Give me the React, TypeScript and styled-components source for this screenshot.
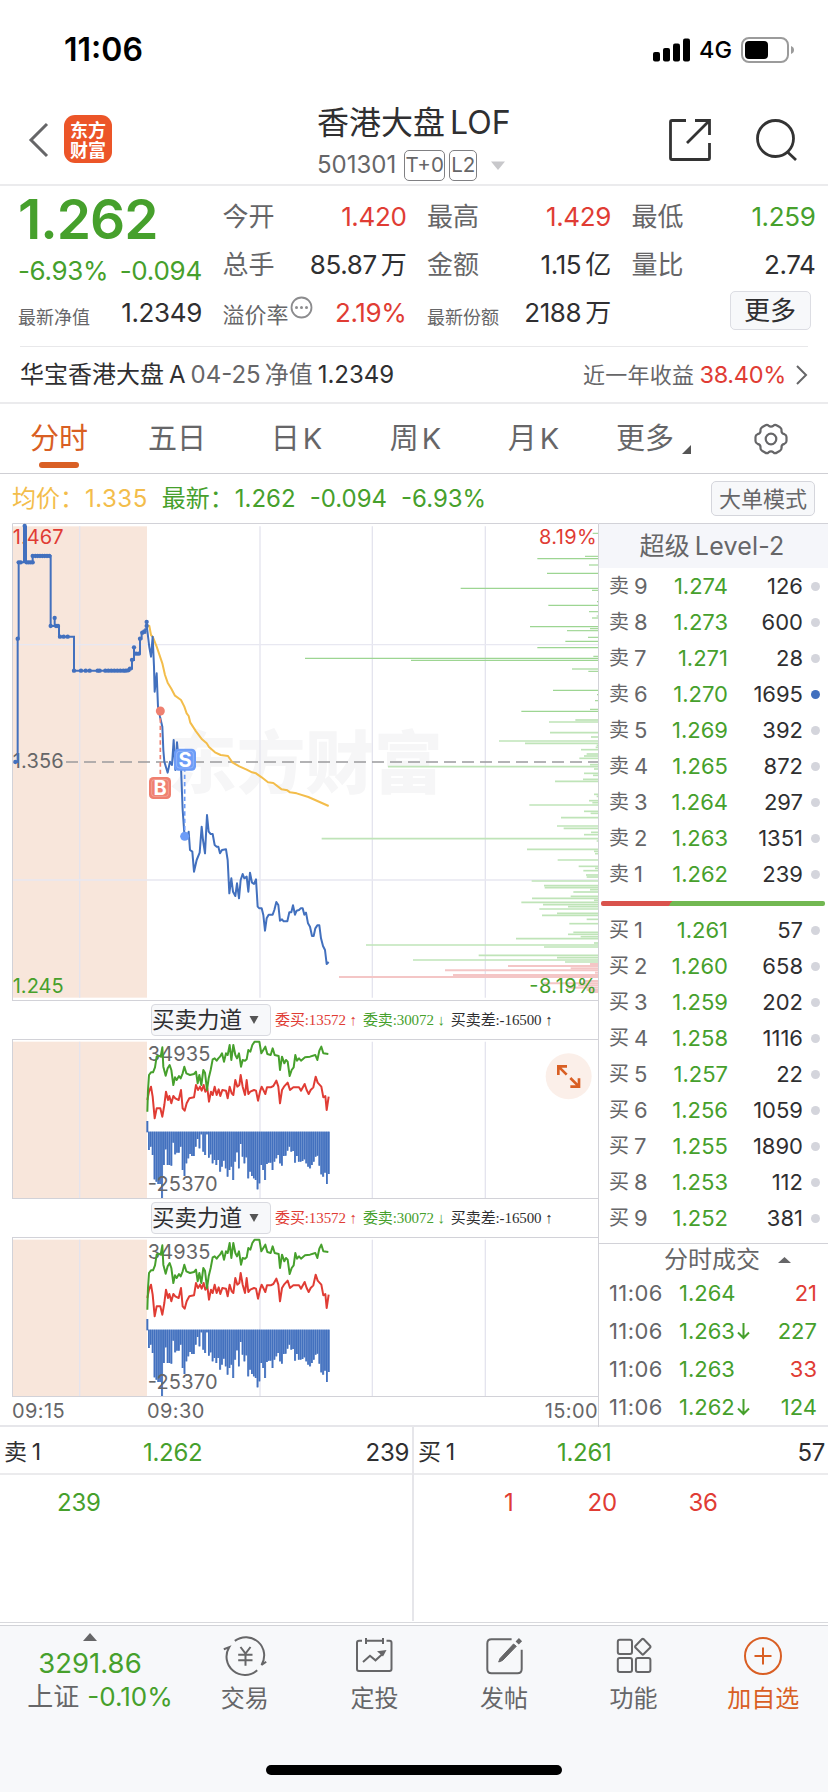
import React from "react";
import styled, { createGlobalStyle } from "styled-components";

const C = {
  green: "#46a02c",
  red: "#e03c34",
  ink: "#2f2f31",
  gray: "#666668",
  orange: "#d95f24",
  blue: "#4270be",
  yellow: "#f3bd4b",
  line: "#d2d2d8",
  soft: "#ebebed",
  panel: "#f7f8fa",
};

const FONT = `Inter, "Noto Sans CJK SC", sans-serif`;

const GlobalStyle = createGlobalStyle`
  * { box-sizing: border-box; }
  body { margin: 0; background: #fff; font-family: ${FONT}; color: ${C.ink}; }
`;

const Screen = styled.div`
  width: 828px;
  height: 1792px;
  display: flex;
  flex-direction: column;
  background: #fff;
  overflow: hidden;
  line-height: 1;
  white-space: nowrap;
`;

const Text = styled.span<{ $size?: number; $color?: string; $weight?: number; $track?: number; $ml?: number }>`
  font-size: ${(p) => p.$size ?? 24}px;
  color: ${(p) => p.$color ?? C.ink};
  font-weight: ${(p) => p.$weight ?? 400};
  letter-spacing: ${(p) => p.$track ?? 0}px;
  margin-left: ${(p) => p.$ml ?? 0}px;
`;

/* ---------- status bar ---------- */
const StatusBar = styled.div`
  height: 98px;
  padding: 2px 33px 0 64px;
  display: flex;
  align-items: center;
  justify-content: space-between;
`;
const StatusIcons = styled.div`
  display: flex;
  align-items: center;
`;

/* ---------- navigation ---------- */
const NavBar = styled.header`
  height: 88px;
  display: flex;
  align-items: center;
  justify-content: space-between;
  padding: 0 30px 2px 28px;
  border-bottom: 2px solid ${C.soft};
`;
const NavSide = styled.div`
  display: flex;
  align-items: center;
  width: 280px;
`;
const Logo = styled.div`
  width: 48px;
  height: 48px;
  margin: 0 0 2px 15px;
  border-radius: 11px;
  background: #ec5528;
  color: #fff;
  display: flex;
  flex-direction: column;
  align-items: center;
  padding-top: 4px;
  font: 700 18px/20px "Noto Sans CJK SC", sans-serif;
`;
const TitleBlock = styled.div`
  width: 200px;
  display: flex;
  flex-direction: column;
  gap: 11px;
  padding: 7px 0 0 4px;
`;
const TitleLine = styled.div`
  display: flex;
  align-items: center;
`;
const CodeLine = styled.div`
  display: flex;
  align-items: center;
  height: 31px;
`;
const Badge = styled.span<{ $w: number; $ml: number }>`
  width: ${(p) => p.$w}px;
  height: 31px;
  margin-left: ${(p) => p.$ml}px;
  border: 1.5px solid #808083;
  border-radius: 5px;
  color: ${C.gray};
  font-size: 20.5px;
  line-height: 28px;
  text-align: center;
`;
const NavActions = styled(NavSide)`
  justify-content: flex-end;
  gap: 43px;
`;

/* ---------- quote ---------- */
const Quote = styled.section`
  height: 160px;
  display: grid;
  grid-template-columns: 184px 184px 184px 184px;
  column-gap: 20.5px;
  padding: 7px 0 0 18px;
`;
const QuoteCol = styled.div`
  display: flex;
  flex-direction: column;
`;
const BigPrice = styled.div`
  height: 54px;
  line-height: 52px;
  color: ${C.green};
  font-size: 55px;
  font-weight: 600;
  letter-spacing: -1px;
`;
const ChangeRow = styled.div`
  height: 42px;
  padding-top: 6px;
  display: flex;
  align-items: center;
  justify-content: space-between;
`;
const QuoteRow = styled.div`
  height: 48px;
  display: flex;
  align-items: center;
  justify-content: space-between;
`;
const QuoteLabel = styled.span<{ $size: number }>`
  display: flex;
  align-items: center;
  color: ${C.gray};
  font-size: ${(p) => p.$size}px;
  padding-top: ${(p) => (p.$size === 18 ? 10 : p.$size === 22 ? 4 : 0)}px;
`;
const Unit = styled.span`
  margin-left: 4px;
`;
const MoreButton = styled.button`
  width: 81px;
  height: 39px;
  margin: 0 5px 5px auto;
  padding: 0;
  border: 1.5px solid #dcdde3;
  border-radius: 5px;
  background: ${C.panel};
  color: ${C.ink};
  font: 400 26px/34px ${FONT};
`;
const FundRow = styled.div`
  height: 56px;
  margin: 0 20px;
  border-top: 1px solid #e8e8ea;
  display: flex;
  align-items: center;
`;
const Spacer = styled.div`
  flex: 1;
`;

/* ---------- tabs ---------- */
const Tabs = styled.nav`
  height: 72px;
  border-top: 2px solid ${C.soft};
  border-bottom: 1px solid #cfcfd4;
  display: grid;
  grid-template-columns: 118px 118px 121px 117px 119px 121px 113px;
`;
const Tab = styled.div<{ $active?: boolean }>`
  display: flex;
  flex-direction: column;
  align-items: center;
  padding-top: 19px;
  font-size: 29px;
  line-height: 32px;
  color: ${(p) => (p.$active ? C.orange : C.gray)};
  &::after {
    content: "";
    display: ${(p) => (p.$active ? "block" : "none")};
    width: 40px;
    height: 6px;
    margin-top: 7px;
    border-radius: 3px;
    background: ${C.orange};
  }
`;
const TabLabel = styled.span`
  display: flex;
  gap: 3px;
`;

/* ---------- legend ---------- */
const Legend = styled.div`
  height: 49px;
  display: flex;
  align-items: center;
  padding: 0 13px 0 12px;
`;
const ModeButton = styled.button`
  width: 104px;
  height: 35px;
  padding: 0;
  border: 1.5px solid #d5d6dc;
  border-radius: 5px;
  background: ${C.panel};
  color: ${C.gray};
  font: 400 22px/30px ${FONT};
`;

/* ---------- market body ---------- */
const Market = styled.section`
  height: 904px;
  display: grid;
  grid-template-columns: 587px 229px;
  padding-left: 12px;
  border-bottom: 2px solid #e6e6ea;
`;
const Charts = styled.div`
  display: flex;
  flex-direction: column;
`;
const ChartSvg = styled.svg`
  display: block;
  flex: none;
`;
const IndicatorBar = styled.div`
  height: 38px;
  padding-left: 139px;
  display: flex;
  align-items: center;
  border-right: 1px solid ${C.line};
  font-family: "Liberation Serif", "Noto Sans CJK SC", serif;
  font-size: 15px;
`;
const IndicatorSelect = styled.div`
  width: 120px;
  height: 32px;
  padding-right: 11px;
  margin-right: 4px;
  display: flex;
  align-items: center;
  justify-content: space-between;
  border: 1.5px solid #d9dae0;
  border-radius: 4px;
  background: ${C.panel};
  font: 400 22.5px/28px ${FONT};
  color: ${C.ink};
`;
const Stat = styled.span<{ $color: string }>`
  color: ${(p) => p.$color};
  margin-right: 6px;
  letter-spacing: -0.1px;
`;
const TimeAxis = styled.div`
  flex: 1;
  display: flex;
  align-items: center;
  padding-bottom: 2px;
  border-right: 1px solid ${C.line};
  font-size: 20px;
  color: ${C.gray};
  letter-spacing: 0.4px;
`;

/* ---------- order book ---------- */
const Book = styled.aside`
  display: flex;
  flex-direction: column;
`;
const BookTitle = styled.div`
  height: 45px;
  border-top: 1px solid ${C.line};
  background: #f5f6fa;
  display: flex;
  align-items: center;
  justify-content: center;
  padding-right: 3px;
  gap: 5px;
  color: ${C.gray};
  font-size: 25px;
  letter-spacing: 0.2px;
`;
const BookRow = styled.div`
  height: 36px;
  display: grid;
  grid-template-columns: 25px 26px 68px 75px 17px;
  padding-left: 10px;
  align-items: center;
  font-size: 22px;
`;
const Side = styled.span`
  color: ${C.gray};
  font-size: 20px;
`;
const Level = styled.span`
  color: ${C.gray};
`;
const Price = styled.span`
  color: ${C.green};
  text-align: right;
`;
const Qty = styled.span<{ $color?: string }>`
  color: ${(p) => p.$color ?? C.ink};
  text-align: right;
`;
const Dot = styled.i<{ $on: boolean }>`
  width: 9px;
  height: 9px;
  border-radius: 50%;
  justify-self: end;
  background: ${(p) => (p.$on ? C.blue : "#d4d5dc")};
`;
const Ratio = styled.div`
  height: 5px;
  margin: 9px 3px 6px 2px;
  border-radius: 2px;
  background: linear-gradient(125deg, #d9534c 31.2%, #72b852 31.2%);
`;
const TradesTitle = styled.div`
  height: 32px;
  margin-top: 7px;
  border-top: 1px solid ${C.line};
  display: flex;
  align-items: center;
  padding-left: 65px;
  gap: 18px;
  font-size: 24px;
  color: ${C.gray};
`;
const TradeRow = styled.div`
  height: 38px;
  display: grid;
  grid-template-columns: 70px 58px 16px 64px;
  padding: 0 0 2px 10px;
  align-items: center;
  font-size: 22px;
  color: ${C.green};
`;
const TradeTime = styled(Level)`
  letter-spacing: 0.4px;
`;

/* ---------- queues ---------- */
const Queues = styled.section`
  height: 196px;
  display: grid;
  grid-template-columns: 414px 414px;
  border-bottom: 1.5px solid #d8d9dd;
`;
const Queue = styled.div<{ $divided?: boolean }>`
  height: 194px;
  border-right: ${(p) => (p.$divided ? "2px solid #e6e6ea" : "none")};
`;
const QueueHead = styled.div`
  height: 48px;
  display: grid;
  grid-template-columns: 139px 1fr 1fr;
  align-items: center;
  padding: 5px 3px 0 4px;
  border-bottom: 2px solid ${C.soft};
  font-size: 24px;
  letter-spacing: -0.3px;
`;
const HeadLabel = styled.span`
  display: flex;
  align-items: center;
  gap: 5px;
  font-size: 23px;
`;
const QueuePrice = styled.span`
  color: ${C.green};
`;
const QueueCells = styled.div<{ $color: string; $pad: number }>`
  height: 56px;
  display: flex;
  align-items: center;
  padding-left: ${(p) => p.$pad}px;
  color: ${(p) => p.$color};
  font-size: 24px;
  letter-spacing: -0.2px;
`;
const Cell = styled.span<{ $w: number }>`
  width: ${(p) => p.$w}px;
`;

/* ---------- bottom bar ---------- */
const BottomBar = styled.footer`
  margin-top: 2px;
  flex: 1;
  border-top: 1.5px solid #d2d3d8;
  background: ${C.panel};
  display: flex;
  flex-direction: column;
`;
const Actions = styled.div`
  height: 139px;
  display: grid;
  grid-template-columns: 180px repeat(5, 129.6px);
`;
const IndexBlock = styled.div`
  display: flex;
  flex-direction: column;
  align-items: center;
  padding-top: 7px;
`;
const IndexValue = styled.div`
  height: 34px;
  margin-top: 5px;
  line-height: 34px;
  font-size: 27.5px;
  color: ${C.green};
`;
const IndexLine = styled.div`
  display: flex;
  align-items: center;
  gap: 8px;
  height: 34px;
  margin-left: 20px;
  letter-spacing: 0.1px;
`;
const Action = styled.div<{ $accent?: boolean }>`
  display: flex;
  flex-direction: column;
  align-items: center;
  padding-top: 10px;
  gap: 7px;
  font-size: 24px;
  line-height: 28px;
  color: ${(p) => (p.$accent ? C.orange : C.gray)};
`;
const HomeIndicator = styled.div`
  width: 296px;
  height: 10px;
  border-radius: 5px;
  background: #000;
  align-self: center;
`;

/* ---------- data ---------- */
const sells = [
  [9, "1.274", 126], [8, "1.273", 600], [7, "1.271", 28], [6, "1.270", 1695], [5, "1.269", 392],
  [4, "1.265", 872], [3, "1.264", 297], [2, "1.263", 1351], [1, "1.262", 239],
] as const;
const buys = [
  [1, "1.261", 57], [2, "1.260", 658], [3, "1.259", 202], [4, "1.258", 1116], [5, "1.257", 22],
  [6, "1.256", 1059], [7, "1.255", 1890], [8, "1.253", 112], [9, "1.252", 381],
] as const;
const trades = [
  ["1.264", "", "21", C.red],
  ["1.263", "↓", "227", C.green],
  ["1.263", "", "33", C.red],
  ["1.262", "↓", "124", C.green],
];

const priceLine =
  "440,345 448,412 453,440 458,380 462,470 464,545 470,490 474,590 480,620 487,650 490,720 493,755 503,788 510,755 516,765 521,690 526,780 531,697 538,770 543,772 548,900 553,970 560,985 566,965 570,1020 577,1025 582,1085 590,1050 599,1028 605,950 609,990 615,1030 621,915 626,965 632,972 638,972 644,1005 650,1010 655,1010 660,1030 666,1020 678,1018 683,1050 688,1150 694,1105 699,1145 706,1158 711,1120 717,1165 722,1110 728,1092 733,1105 740,1100 745,1145 750,1088 756,1118 762,1122 768,1108 773,1190 778,1195 785,1195 790,1215 795,1262 800,1225 806,1214 818,1214 823,1200 829,1176 835,1185 840,1232 846,1228 851,1234 862,1234 868,1207 874,1207 879,1186 885,1214 890,1202 897,1200 902,1195 908,1195 913,1214 918,1208 924,1240 930,1250 936,1278 941,1278 946,1255 952,1246 958,1246 963,1285 969,1308 975,1320 980,1362 986,1356";
const averageLine =
  "440,345 448,348 453,375 459,382 470,410 487,460 495,495 503,518 514,536 525,557 543,570 553,590 560,610 566,618 571,638 588,664 606,688 620,700 627,711 645,727 662,735 684,738 697,757 718,769 740,779 756,787 768,790 785,802 804,817 820,819 845,838 862,841 870,847 890,850 925,861 986,888";
const auctionLine =
  "M46 756H53V386H56V157H98V138H152V348H164V324V348H177V380H222V482H388V476H396V450H402V412V431H420V386H425V368H436V358H440V336V350";
const auctionDots = [
  [46, 756], [53, 386], [56, 157], [62, 157], [74, 48], [80, 157], [86, 157], [92, 157], [98, 157], [98, 138], [106, 138], [113, 138],
  [120, 138], [127, 138], [134, 138], [141, 138], [148, 138], [152, 348], [164, 324], [168, 348], [174, 348], [180, 380], [191, 380],
  [203, 380], [222, 482], [243, 482], [257, 482], [269, 482], [293, 482], [299, 482], [316, 482], [325, 482], [334, 482], [343, 482],
  [352, 482], [361, 482], [370, 482], [377, 482], [384, 481], [390, 476], [396, 450], [402, 412], [408, 431], [416, 431], [420, 386],
  [427, 368], [433, 364], [440, 348], [440, 336],
];

/* price level volumes: [left edge, level] */
const sellVolumes = [
  [908, 70], [885, 139], [742, 146], [897, 165], [771, 190], [512, 235], [906, 241], [921, 275], [775, 286], [897, 305], [920, 318],
  [906, 324], [720, 350], [900, 356], [831, 362], [894, 382], [826, 394], [742, 413], [910, 439], [45, 445], [363, 451], [846, 477],
  [895, 484], [789, 541], [921, 554], [915, 572], [900, 598], [694, 604], [856, 630], [777, 636], [780, 668], [903, 681], [627, 693],
  [705, 700], [920, 706], [917, 712], [873, 719], [890, 732], [882, 738], [868, 745], [900, 764], [294, 770], [912, 777], [882, 790],
  [909, 796], [879, 808], [795, 814], [912, 853], [920, 859], [897, 872], [907, 878], [718, 885], [882, 904], [902, 910], [813, 923],
  [801, 948], [821, 955], [903, 967], [882, 974], [95, 986], [920, 993], [711, 1018], [912, 1024], [915, 1031], [803, 1050],
  [866, 1069], [915, 1075], [880, 1082], [888, 1095], [890, 1101], [725, 1113], [762, 1127], [764, 1133], [900, 1139], [850, 1146],
  [842, 1159], [726, 1165], [912, 1171], [694, 1177], [759, 1184], [834, 1190], [748, 1197], [801, 1210], [756, 1216], [890, 1228],
  [838, 1241], [850, 1267], [834, 1273], [872, 1280], [678, 1286], [912, 1299], [228, 1305], [762, 1311], [566, 1336], [801, 1343],
  [369, 1350], [825, 1356],
];
const buyVolumes = [
  [900, 1362], [654, 1368], [842, 1375], [465, 1381], [915, 1388], [489, 1395], [147, 1401], [880, 1413], [760, 1420], [865, 1426],
  [830, 1433], [890, 1440], [900, 1446],
];

const askPower =
  "442,365 444,300 447,255 453,247 459,247 465,232 470,200 476,197 482,200 487,172 490,230 497,257 503,235 509,225 514,240 520,285 525,262 530,270 537,258 542,265 548,250 553,230 559,250 570,255 582,252 588,245 593,280 598,255 604,285 610,240 615,248 621,300 626,265 632,240 638,208 644,205 650,212 655,205 660,200 666,190 672,215 678,190 683,195 689,165 694,210 700,165 706,195 711,205 717,190 723,230 728,210 735,212 740,208 745,180 751,185 757,165 764,155 778,155 784,190 790,180 796,170 802,192 812,195 818,175 824,195 836,198 840,240 846,200 853,220 858,210 863,215 869,258 875,240 881,232 886,195 891,212 897,205 903,212 915,202 930,200 946,195 952,210 958,182 964,170 970,190 985,192";
const bidPower =
  "442,330 447,305 453,290 458,320 464,385 470,355 481,355 487,380 493,345 498,305 504,330 508,318 514,340 520,318 526,325 536,330 543,300 548,355 554,362 560,340 568,325 582,322 588,285 594,300 600,290 605,302 611,285 616,305 622,295 627,335 633,305 638,315 644,290 650,315 656,298 661,318 667,300 678,302 683,325 689,290 695,310 700,315 706,270 712,290 718,285 722,255 728,290 735,315 740,270 745,312 751,305 762,300 768,302 774,332 780,305 785,290 796,312 801,292 812,292 820,288 829,272 835,290 840,340 846,300 852,290 863,278 870,300 880,292 897,292 903,302 914,282 920,300 926,312 932,300 940,292 947,260 953,278 964,290 970,322 976,318 980,360 986,320";
const powerGap = [
  480, 470, 495, 568, 575, 582, 582, 624, 525, 478, 525, 525, 527, 458, 493, 488, 488, 470, 540, 558, 520, 505, 492, 498, 498, 470,
  447, 475, 433, 485, 495, 433, 503, 493, 520, 510, 525, 510, 545, 530, 512, 535, 560, 540, 530, 570, 515, 487, 535, 462, 500, 520,
  502, 565, 545, 558, 565, 570, 598, 580, 525, 540, 570, 522, 518, 518, 540, 515, 505, 495, 520, 527, 498, 497, 482, 470, 485, 483,
  518, 498, 515, 515, 513, 508, 520, 530, 535, 525, 515, 500, 497, 527, 553, 560, 548, 582, 552,
];

const gridX = [239, 780, 1117, 1456];

function Tag({ x, y, label, color }: { x: number; y: number; label: string; color: string }) {
  return (
    <g>
      <rect x={x - 33} y={y - 33} width={66} height={66} rx={13} fill={color} />
      <rect x={x - 25} y={y - 25} width={50} height={50} rx={8} fill="none" stroke="#fff" strokeOpacity={0.25} strokeWidth={3} />
      <text x={x} y={y + 21} textAnchor="middle" fontSize={60} fontWeight={700} fill="#fff">{label}</text>
    </g>
  );
}

function PriceChart() {
  return (
    <ChartSvg width={587} height={478} viewBox="36 39 1761 1434" fontFamily={FONT}>
      <rect x={38} y={49} width={403} height={1414} fill="#f8e6db" />
      <text x={504} y={834} fontSize={206} fontWeight={900} fill="#f6f6f7" textLength={824}>东方财富</text>
      {gridX.map((x) => <path key={x} d={`M${x} 49V1463`} stroke="#e4e4ee" strokeWidth={4} />)}
      <path d="M38 404H1794M38 1110H1794" stroke="#e8e8f1" strokeWidth={4} />
      {sellVolumes.map(([x, y]) => (
        <path key={y} d={`M${x + 870} ${y}H1794`} stroke={y < 640 ? "#9dd592" : "#bfe4b8"} strokeWidth={y < 640 ? 3.4 : 5} />
      ))}
      {buyVolumes.map(([x, y]) => <path key={y} d={`M${x + 870} ${y}H1794`} stroke="#f4c6c6" strokeWidth={6} />)}
      <path d="M198 756H1794" stroke="#9b9b9d" strokeWidth={5} strokeDasharray="36 18" />
      <path d="M37.5 1473V40.5H1795.5V1473M36 1471.5H1797" fill="none" stroke={C.line} strokeWidth={3} />
      <g fontSize={60}>
        <text x={38} y={102} fill={C.red} textLength={153}>1.467</text>
        <text x={38} y={774} fill={C.gray} textLength={153}>1.356</text>
        <text x={38} y={1449} fill={C.green} textLength={153}>1.245</text>
        <text x={1617} y={102} fill={C.red} textLength={173}>8.19%</text>
        <text x={1588} y={1449} fill={C.green} textLength={202}>-8.19%</text>
      </g>
      <polyline points={averageLine} fill="none" stroke={C.yellow} strokeWidth={6} strokeLinejoin="round" />
      <path d={auctionLine} fill="none" stroke={C.blue} strokeWidth={6} />
      <path d="M75 48V157" stroke={C.blue} strokeWidth={12} />
      {auctionDots.map(([x, y], i) => <circle key={i} cx={x} cy={y} r={6.5} fill={C.blue} />)}
      <polyline points={priceLine} fill="none" stroke={C.blue} strokeWidth={6} strokeLinejoin="round" />
      <path d="M481 603V800" stroke="#ef8070" strokeWidth={5} strokeDasharray="13 9" />
      <path d="M554 750V978" stroke="#6c9cf7" strokeWidth={5} strokeDasharray="13 9" />
      <circle cx={481} cy={603} r={13.5} fill="#ef8070" />
      <circle cx={554} cy={979} r={13.5} fill="#6c9cf7" />
      <Tag x={480} y={834} label="B" color="#ef8070" />
      <Tag x={555} y={749} label="S" color="#6c9cf7" />
    </ChartSvg>
  );
}

function PowerChart({ expandable }: { expandable?: boolean }) {
  return (
    <ChartSvg width={587} height={160} viewBox="36 147 1761 480" fontFamily={FONT}>
      <rect x={38} y={155} width={403} height={470} fill="#f8e6db" />
      {gridX.map((x) => <path key={x} d={`M${x} 155V624`} stroke="#e4e4ee" strokeWidth={4} />)}
      <rect x={37.5} y={148.5} width={1758} height={477} fill="none" stroke={C.line} strokeWidth={3} />
      <path d="M442 393V427" stroke={C.blue} strokeWidth={6} />
      {powerGap.map((v, i) => {
        const x = 444.2 + i * 5.62;
        return (
          <g key={i}>
            <rect x={x} y={425} width={5.7} height={v - 425} fill="#6f93d0" />
            <rect x={x} y={425} width={4.2} height={v - 425} fill={C.blue} />
          </g>
        );
      })}
      <g fontSize={60} fill={C.gray}>
        <text x={443} y={214} textLength={188}>34935</text>
        <text x={443} y={604} textLength={210}>-25370</text>
      </g>
      <polyline points={bidPower} fill="none" stroke={C.red} strokeWidth={6} strokeLinejoin="round" />
      <polyline points={askPower} fill="none" stroke={C.green} strokeWidth={6} strokeLinejoin="round" />
      {expandable && (
        <g>
          <circle cx={1706} cy={259} r={69} fill="#fbefe9" />
          <path d="M1675 255V229H1701M1675 229L1700 254M1737 265V290H1711M1737 290L1711 264" fill="none" stroke={C.orange} strokeWidth={8} />
        </g>
      )}
    </ChartSvg>
  );
}

function Indicator() {
  return (
    <IndicatorBar>
      <IndicatorSelect>
        买卖力道
        <svg width="10" height="8" viewBox="0 0 10 8"><path d="M0.5 0H9.5L5 8Z" fill="#555" /></svg>
      </IndicatorSelect>
      <Stat $color={C.red}>委买:13572 ↑</Stat>
      <Stat $color={C.green}>委卖:30072 ↓</Stat>
      <Stat $color={C.ink}>买卖差:-16500 ↑</Stat>
    </IndicatorBar>
  );
}

function Row({ side, row }: { side: string; row: readonly [number, string, number] }) {
  return (
    <BookRow>
      <Side>{side}</Side>
      <Level>{row[0]}</Level>
      <Price>{row[1]}</Price>
      <Qty>{row[2]}</Qty>
      <Dot $on={row[2] === 1695} />
    </BookRow>
  );
}

function Metric({ label, size = 26, children, color }: { label: React.ReactNode; size?: number; children: React.ReactNode; color?: string }) {
  return (
    <QuoteRow>
      <QuoteLabel $size={size}>{label}</QuoteLabel>
      <Text $size={26} $color={color} $track={-0.35}>{children}</Text>
    </QuoteRow>
  );
}

const stroke = { fill: "none", stroke: "currentColor", strokeWidth: 2 } as const;

export default function App() {
  return (
    <Screen>
      <GlobalStyle />
      <StatusBar>
        <Text $size={32} $weight={600} $color="#000">11:06</Text>
        <StatusIcons>
          <svg width="38" height="24" viewBox="0 0 38 24">
            <rect x="0" y="14" width="7" height="9.5" rx="2" />
            <rect x="10" y="10" width="7" height="13.5" rx="2" />
            <rect x="20" y="5.5" width="7" height="18" rx="2" />
            <rect x="30" y="0.5" width="7" height="23" rx="2" />
          </svg>
          <Text $size={23.5} $weight={500} $color="#000" $ml={8}>4G</Text>
          <svg width="54" height="26" viewBox="0 0 54 26" style={{ marginLeft: 9 }}>
            <rect x="1" y="1" width="46" height="24" rx="7" fill="none" stroke="#9b9b9b" strokeWidth="2" />
            <rect x="4" y="4" width="23" height="18" rx="4" />
            <path d="M50 9c2 .8 3 2 3 4s-1 3.2-3 4z" fill="#9b9b9b" />
          </svg>
        </StatusIcons>
      </StatusBar>

      <NavBar>
        <NavSide>
          <svg width="21" height="36" viewBox="0 0 21 36"><path d="M19 2L3 18L19 34" fill="none" stroke={C.gray} strokeWidth="3" /></svg>
          <Logo><span>东方</span><span>财富</span></Logo>
        </NavSide>
        <TitleBlock>
          <TitleLine>
            <Text $size={32}>香港大盘</Text>
            <Text $size={32} $ml={5}>LOF</Text>
          </TitleLine>
          <CodeLine>
            <Text $size={24} $color={C.gray}>501301</Text>
            <Badge $w={41} $ml={8}>T+0</Badge>
            <Badge $w={28} $ml={4}>L2</Badge>
            <svg width="14" height="9" viewBox="0 0 14 9" style={{ marginLeft: 14 }}><path d="M0 0.5H14L7 9Z" fill="#c8c8cb" /></svg>
          </CodeLine>
        </TitleBlock>
        <NavActions>
          <svg width="44" height="44" viewBox="0 0 44 44" fill="none" stroke="#333" strokeWidth="2.8">
            <path d="M18 2.5H4Q2.500 2.5 2.5 4V40Q2.500 41.5 4 41.5H40Q41.5 41.5 41.5 40V25M27 2.5H41.5V17M41.5 2.5L19 25" />
          </svg>
          <svg width="43" height="43" viewBox="0 0 43 43" fill="none" stroke="#333" strokeWidth="2.8">
            <circle cx="20.5" cy="19.5" r="18" /><path d="M32.5 33L41 41" />
          </svg>
        </NavActions>
      </NavBar>

      <Quote>
        <QuoteCol>
          <BigPrice>1.262</BigPrice>
          <ChangeRow>
            <Text $size={26} $color={C.green} $track={-0.35}>-6.93%</Text>
            <Text $size={26} $color={C.green} $track={-0.25}>-0.094</Text>
          </ChangeRow>
          <Metric label="最新净值" size={18}>1.2349</Metric>
        </QuoteCol>
        <QuoteCol>
          <Metric label="今开" color={C.red}>1.420</Metric>
          <Metric label="总手">85.87<Unit>万</Unit></Metric>
          <Metric
            size={22}
            color={C.red}
            label={
              <>
                溢价率
                <svg width="23" height="23" viewBox="0 0 23 23" style={{ margin: "0 0 15px 1px" }}>
                  <circle cx="11.5" cy="11.5" r="10" fill="none" stroke="#8c8c8e" strokeWidth="1.8" />
                  <circle cx="6.5" cy="11.5" r="1.5" fill="#8c8c8e" /><circle cx="11.5" cy="11.5" r="1.5" fill="#8c8c8e" /><circle cx="16.5" cy="11.5" r="1.5" fill="#8c8c8e" />
                </svg>
              </>
            }
          >
            2.19%
          </Metric>
        </QuoteCol>
        <QuoteCol>
          <Metric label="最高" color={C.red}>1.429</Metric>
          <Metric label="金额">1.15<Unit>亿</Unit></Metric>
          <Metric label="最新份额" size={18}>2188<Unit>万</Unit></Metric>
        </QuoteCol>
        <QuoteCol>
          <Metric label="最低" color={C.green}>1.259</Metric>
          <Metric label="量比">2.74</Metric>
          <QuoteRow><MoreButton>更多</MoreButton></QuoteRow>
        </QuoteCol>
      </Quote>
      <FundRow>
        <Text>华宝香港大盘</Text>
        <Text $ml={5}>A</Text>
        <Text $ml={5} $color={C.gray}>04-25</Text>
        <Text $ml={4} $color={C.gray}>净值</Text>
        <Text $ml={5}>1.2349</Text>
        <Spacer />
        <Text $size={22} $color={C.gray} $track={0.3}>近一年收益</Text>
        <Text $ml={5} $size={23.5} $track={-0.3} $color={C.red}>38.40%</Text>
        <svg width="13" height="22" viewBox="0 0 13 22" style={{ marginLeft: 9 }}><path d="M2 2L11 11L2 20" fill="none" stroke={C.gray} strokeWidth="2" /></svg>
      </FundRow>

      <Tabs>
        <Tab $active>分时</Tab>
        <Tab>五日</Tab>
        <Tab><TabLabel>日<span>K</span></TabLabel></Tab>
        <Tab><TabLabel>周<span>K</span></TabLabel></Tab>
        <Tab><TabLabel>月<span>K</span></TabLabel></Tab>
        <Tab>
          <TabLabel>
            更多
            <svg width="9" height="9" viewBox="0 0 9 9" style={{ margin: "22px 0 0 5px" }}><path d="M9 0V9H0Z" fill="#555" /></svg>
          </TabLabel>
        </Tab>
        <Tab>
          <svg width="34" height="32" viewBox="0 0 34 32" fill="none" stroke={C.gray} strokeWidth="2.2" strokeLinejoin="round">
            <path d="M11 2.5Q13 1 14.5 2.6Q17 4.8 19.5 2.6Q21 1 23 2.5L26 4.3Q27.8 5.5 27.5 7.5Q27.2 10.5 30.5 11.2Q32.5 12 32.5 14V18Q32.5 20 30.5 20.8Q27.2 21.5 27.5 24.5Q27.8 26.5 26 27.7L23 29.5Q21 31 19.5 29.4Q17 27.2 14.5 29.4Q13 31 11 29.5L8 27.7Q6.2 26.5 6.5 24.5Q6.8 21.5 3.5 20.8Q1.5 20 1.5 18V14Q1.5 12 3.5 11.2Q6.8 10.5 6.5 7.5Q6.2 5.5 8 4.3Z" />
            <circle cx="17" cy="16" r="5.3" />
          </svg>
        </Tab>
      </Tabs>

      <Legend>
        <Text $color={C.yellow}>均价：</Text>
        <Text $color={C.yellow} $ml={1} $track={0.5}>1.335</Text>
        <Text $ml={14} $color={C.green}>最新：</Text>
        <Text $color={C.green} $ml={1}>1.262</Text>
        <Text $ml={14} $color={C.green}>-0.094</Text>
        <Text $ml={14} $color={C.green}>-6.93%</Text>
        <Spacer />
        <ModeButton>大单模式</ModeButton>
      </Legend>

      <Market>
        <Charts>
          <PriceChart />
          <Indicator />
          <PowerChart expandable />
          <Indicator />
          <PowerChart />
          <TimeAxis>
            <Cell $w={135}>09:15</Cell>
            <Cell $w={100}>09:30</Cell>
            <Spacer />
            <span>15:00</span>
          </TimeAxis>
        </Charts>
        <Book>
          <BookTitle><span>超级</span><span>Level-2</span></BookTitle>
          {sells.map((r) => <Row key={r[0]} side="卖" row={r} />)}
          <Ratio />
          {buys.map((r) => <Row key={r[0]} side="买" row={r} />)}
          <TradesTitle>
            分时成交
            <svg width="13" height="6" viewBox="0 0 13 6"><path d="M0 6H13L6.5 0Z" fill={C.gray} /></svg>
          </TradesTitle>
          {trades.map(([price, arrow, qty, color], i) => (
            <TradeRow key={i}>
              <TradeTime>11:06</TradeTime>
              <span>{price}</span>
              {arrow ? (
                <svg width="13" height="18" viewBox="0 0 13 18"><path d="M6.5 1V16M1 10.5L6.5 16L12 10.5" fill="none" stroke={C.green} strokeWidth="2" /></svg>
              ) : <span />}
              <Qty $color={color}>{qty}</Qty>
            </TradeRow>
          ))}
        </Book>
      </Market>

      <Queues>
        <Queue $divided>
          <QueueHead>
            <HeadLabel><span>卖</span><span>1</span></HeadLabel>
            <QueuePrice>1.262</QueuePrice>
            <Qty>239</Qty>
          </QueueHead>
          <QueueCells $color={C.green} $pad={57}><Cell $w={90}>239</Cell></QueueCells>
        </Queue>
        <Queue>
          <QueueHead>
            <HeadLabel><span>买</span><span>1</span></HeadLabel>
            <QueuePrice>1.261</QueuePrice>
            <Qty>57</Qty>
          </QueueHead>
          <QueueCells $color={C.red} $pad={90}>
            <Cell $w={83.5}>1</Cell>
            <Cell $w={101}>20</Cell>
            <Cell $w={60}>36</Cell>
          </QueueCells>
        </Queue>
      </Queues>

      <BottomBar>
        <Actions>
          <IndexBlock>
            <svg width="14" height="8" viewBox="0 0 14 8"><path d="M0 8H14L7 0Z" fill={C.gray} /></svg>
            <IndexValue>3291.86</IndexValue>
            <IndexLine>
              <Text $size={26} $color={C.gray}>上证</Text>
              <Text $size={26} $color={C.green}>-0.10%</Text>
            </IndexLine>
          </IndexBlock>
          <Action>
            <svg width="44" height="42" viewBox="0 0 44 42" {...stroke}>
              <path d="M11.8 4.9A18.3 18.3 0 0 1 38.5 29L43.2 25.700M34.2 34.200A18.3 18.3 0 0 1 6.200 11.200L0.8 13.200" />
              <path d="M17.5 11L22.5 17.500L27.500 11M22.5 17.500V29.700M15.200 18.700H29.500M15.200 24.300H29.500" />
            </svg>
            交易
          </Action>
          <Action>
            <svg width="38" height="42" viewBox="0 0 38 42" {...stroke}>
              <path d="M7 4.800H4Q2 4.800 2 6.800V33Q2 35 4 35H34.500Q36.500 35 36.500 33V6.800Q36.500 4.800 34.500 4.800H31.500M11 4.800H28M11 2V8M28 2V8M8 26L15 19.700L20.500 24.300L28 17.500" />
              <path d="M22 15.300L31.500 14L28 20.500Z" fill="currentColor" stroke="none" />
            </svg>
            定投
          </Action>
          <Action>
            <svg width="40" height="42" viewBox="0 0 40 42" {...stroke}>
              <path d="M27.600 3.300H7.500Q3.300 3.300 3.300 7.500V33Q3.300 37.300 7.500 37.300H33.500Q37.700 37.300 37.700 33V13.700" />
              <path d="M14.700 26L16 22.500L29.500 8L32.300 10.300L18.500 24.500Z" fill="currentColor" strokeWidth="1" strokeLinejoin="round" />
              <path d="M33.200 7L36.500 3.700" strokeWidth="4.500" />
            </svg>
            发帖
          </Action>
          <Action>
            <svg width="38" height="42" viewBox="0 0 38 42" {...stroke}>
              <rect x="2.800" y="3.800" width="14.200" height="14.200" rx="2" /><rect x="2.800" y="22" width="14.200" height="14" rx="2" /><rect x="20.900" y="22" width="14.500" height="14" rx="2" />
              <path d="M28.500 3L35 9.700Q36 10.700 35 11.700L28.500 18.300Q27.800 19 27.100 18.300L20.600 11.700Q19.600 10.700 20.600 9.700L27.100 3Q27.800 2.300 28.500 3Z" />
            </svg>
            功能
          </Action>
          <Action $accent>
            <svg width="42" height="42" viewBox="0 0 42 42" {...stroke}>
              <circle cx="21" cy="20" r="18" /><path d="M12.500 20H29.500M21 11.500V28.500" />
            </svg>
            加自选
          </Action>
        </Actions>
        <HomeIndicator />
      </BottomBar>
    </Screen>
  );
}
